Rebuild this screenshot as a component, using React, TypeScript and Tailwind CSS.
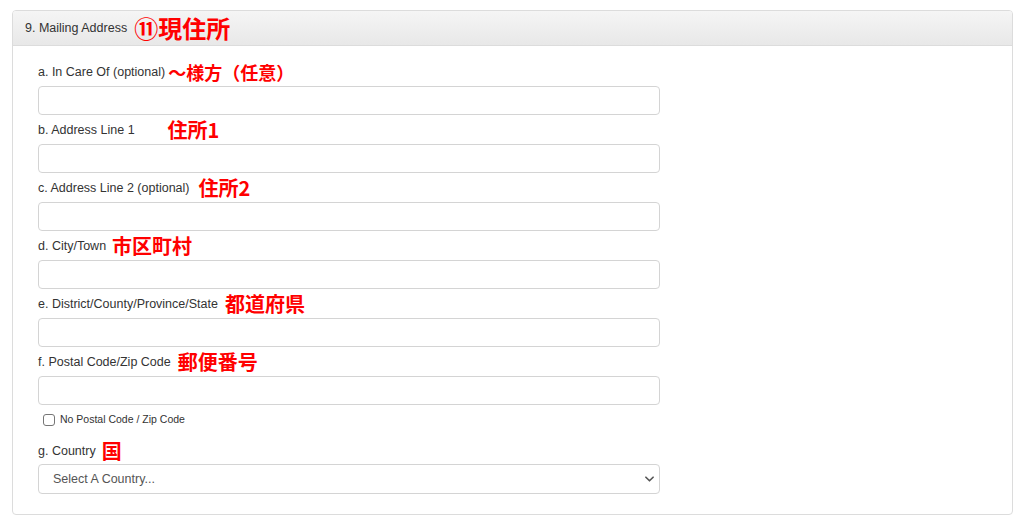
import React from 'react';

type Field = {
  label: string;
  note: string;
  gap: string;
  size?: string;
};

const fields: Field[] = [
  { label: 'a. In Care Of (optional)', note: '〜様方（任意）', gap: 'ml-[3px]', size: 'text-[18px]' },
  { label: 'b. Address Line 1', note: '住所1', gap: 'ml-[33px]' },
  { label: 'c. Address Line 2 (optional)', note: '住所2', gap: 'ml-[9px]' },
  { label: 'd. City/Town', note: '市区町村', gap: 'ml-[6px]' },
  { label: 'e. District/County/Province/State', note: '都道府県', gap: 'ml-[7px]' },
  { label: 'f. Postal Code/Zip Code', note: '郵便番号', gap: 'ml-[7px]' },
];

const sans = "font-['Liberation_Sans','Helvetica',Arial,sans-serif]";
const jp = "font-['Noto_Sans_CJK_JP','Noto_Sans',sans-serif]";

function Label({ label, note, gap, size = 'text-[20px]' }: Field) {
  return (
    <div className="flex h-6 items-center">
      <span className={`${sans} text-[12.5px] text-[#333]`}>{label}</span>
      <span className={`${jp} ${gap} ${size} font-bold leading-6 text-[#ff0000]`}>{note}</span>
    </div>
  );
}

export default function App() {
  return (
    <main className="min-h-[522px] w-[1024px] bg-white pt-[10px] pl-[12px]">
      <section className="w-[1001px] overflow-hidden rounded-[4px] border border-[#dcdcdc] bg-white">
        <header className="flex h-[35px] items-center border-b border-[#dcdcdc] bg-linear-to-b from-[#f5f5f5] to-[#e8e8e8] pl-[12px]">
          <span className={`${sans} text-[12.5px] text-[#333]`}>9. Mailing Address</span>
          <span className={`${jp} ml-[7px] text-[24px] font-bold leading-7 text-[#ff0000]`}>⑪現住所</span>
        </header>

        <div className="pt-[14px] pb-[20px] pl-[25px]">
          {fields.map((f) => (
            <div key={f.label} className="mb-[3px]">
              <Label {...f} />
              <input
                type="text"
                className="mt-[2px] block h-[29px] w-[622px] rounded-[4px] border border-[#d4d4d4] bg-white px-3 outline-none"
              />
            </div>
          ))}

          <label className="mt-[6px] flex h-[18px] items-center pl-[5px]">
            <span className="h-[12px] w-[12px] rounded-[3px] border border-[#767676] bg-white" />
            <span className={`${sans} ml-[5px] text-[10.5px] text-[#333]`}>No Postal Code / Zip Code</span>
          </label>

          <div className="mt-[10px]">
            <div className="flex h-6 items-center">
              <span className={`${sans} text-[12.5px] text-[#333]`}>g. Country</span>
              <span className={`${jp} ml-[6px] text-[20px] font-bold leading-6 text-[#ff0000]`}>国</span>
            </div>
            <div className="relative mt-[1px] w-[622px]">
              <select
                defaultValue=""
                className={`${sans} block h-[30px] w-full appearance-none rounded-[4px] border border-[#d4d4d4] bg-white pl-[14px] text-[12.5px] text-[#555] outline-none`}
              >
                <option value="">Select A Country...</option>
              </select>
              <svg
                viewBox="0 0 10 6"
                className="pointer-events-none absolute top-[12px] right-[6px] h-[6px] w-[9px]"
                fill="none"
                stroke="#555"
                strokeWidth="1.8"
                strokeLinecap="round"
                strokeLinejoin="round"
              >
                <path d="M1 1l4 4 4-4" />
              </svg>
            </div>
          </div>
        </div>
      </section>
    </main>
  );
}
